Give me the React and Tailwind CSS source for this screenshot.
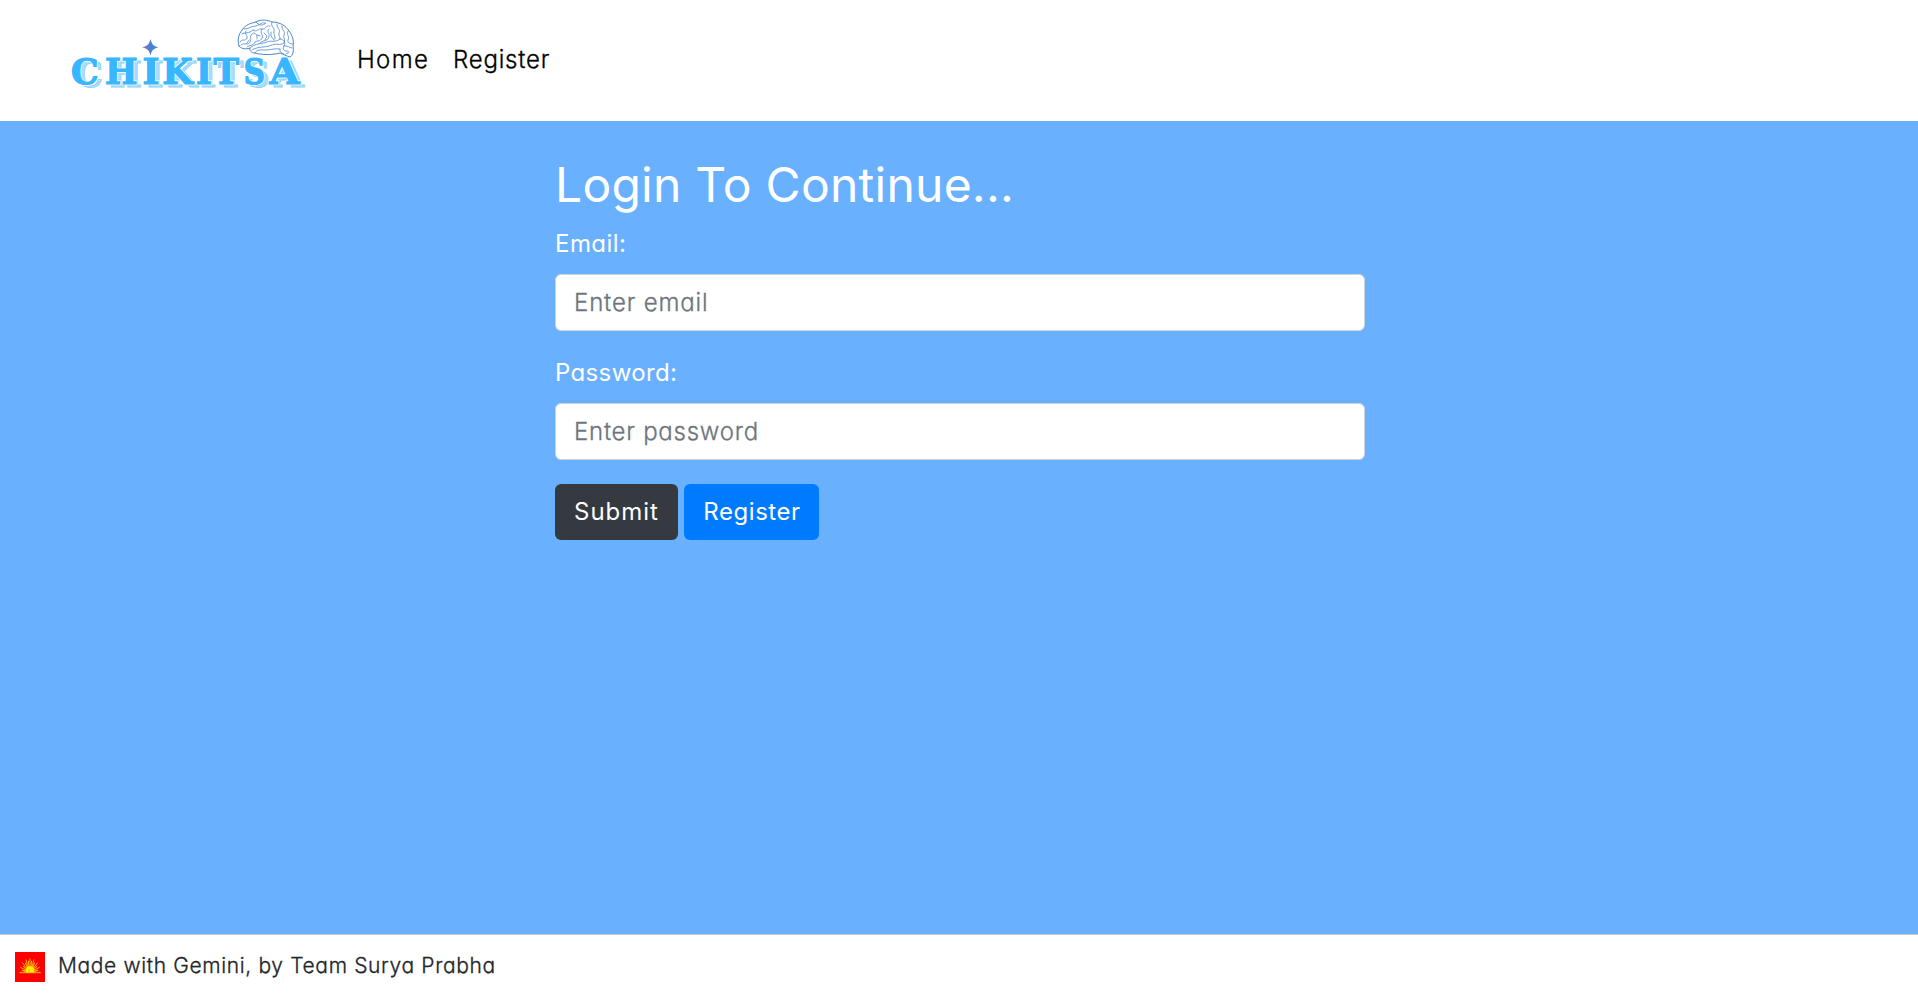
const LETTERS = [
  ['C', 71, 27.5],
  ['H', 105, 32.5],
  ['I', 142.5, 17],
  ['K', 162.3, 30.5],
  ['I', 196, 16],
  ['T', 213.5, 25.5],
  ['S', 243.5, 21.5],
  ['A', 269.5, 30],
];

function Logo() {
  return (
    <svg className="block h-[100px] w-[250px]" viewBox="60 10 250 100" role="img" aria-label="Chikitsa">
      <defs>
        <g id="word" fontFamily="'DejaVu Serif', serif" fontWeight="700" fontSize="36">
          {LETTERS.map(([c, x, w], i) => (
            <text key={i} x={x} y="83.6" textLength={w} lengthAdjust="spacingAndGlyphs">
              {c}
            </text>
          ))}
        </g>
        <pattern id="hatch" width="2" height="2" patternUnits="userSpaceOnUse">
          <rect width="2" height="2" fill="#d6efff" />
          <rect width="1" height="1" fill="#6cc6fb" />
          <rect x="1" y="1" width="1" height="1" fill="#8ed3fc" />
        </pattern>
        <linearGradient id="spark" x1="0" x2="1">
          <stop offset="0" stopColor="#9a70b8" />
          <stop offset="0.5" stopColor="#4a7fd0" />
          <stop offset="1" stopColor="#3e8fe0" />
        </linearGradient>
      </defs>
      <g fill="none" stroke="#3577c4" strokeWidth="0.7" strokeLinecap="round" strokeLinejoin="round">
        <path strokeWidth="0.9" d="M239 46C237 39 239 34 242 30C245 25 251 23 256 22C261 19 268 20 272 22C280 22 286 26 289 31C293 36 294 42 293 46C294 50 293 56 290 57C286 56 283 54 280 53C273 55 261 55 255 53C251 53 249 50 250 48C245 50 240 48 239 46Z" />
        <path d="M240 42C242 38 246 42 247 38C248 35 244 34 246 31M242 34C245 32 249 34 253 30M244 29C249 29 251 26 256 26C260 25 261 22 265 23" />
        <path d="M241 45C245 42 248 46 250 42C252 38 249 37 252 34C255 31 258 36 257 39M247 47C250 45 253 46 255 42C258 40 260 42 262 38C264 35 259 33 262 29" />
        <path d="M253 30C257 33 258 28 262 29C266 30 265 25 270 26M256 22C259 26 263 26 266 23M260 43C265 39 267 42 269 37C270 33 266 32 269 29" />
        <path d="M250 48C255 43 262 44 267 42C272 40 275 43 280 39M252 50C258 46 265 48 272 45C277 43 280 46 284 43M255 53C257 49 261 50 266 50C271 50 275 48 280 49" />
        <path d="M272 22C270 27 275 27 274 31C273 35 276 36 275 39M277 24C276 28 281 29 279 33C278 36 281 37 280 39M282 26C281 30 286 31 284 35C283 38 286 40 284 43" />
        <path d="M288 31C286 35 290 36 288 40C287 43 291 44 293 44M280 39C284 39 286 43 284 46C282 49 284 52 288 51M284 46C288 45 289 48 292 48M280 49C279 51 281 53 284 54M286 54L289 52" />
        <path d="M264 33L267 36L265 40M271 32L271 36L274 40M249 40L247 43M257 35L260 36" />
      </g>
      <use href="#word" fill="url(#hatch)" stroke="#8fd2fb" strokeWidth="0.8" transform="translate(4.6 3.2)" />
      <use href="#word" fill="#fff" stroke="#fff" strokeWidth="2.6" />
      <use href="#word" fill="#38b6ff" stroke="#38b6ff" strokeWidth="1.2" />
      <path fill="url(#spark)" d="M150.5 39C151.7 44.3 153.2 46 158.5 47.3C153.2 48.8 151.7 50.4 150.5 55.5C149.2 50.4 147.7 48.8 142 47.3C147.7 46 149.2 44.3 150.5 39Z" />
    </svg>
  );
}

const RAYS = Array.from({ length: 17 }, (_, i) => {
  const a = Math.PI * (i / 16);
  const r = i % 2 ? 8.5 : 10.5;
  return `M${15 - 5 * Math.cos(a)} ${20 - 5 * Math.sin(a)}L${15 - r * Math.cos(a)} ${20.5 - (r + 3.5) * Math.sin(a)}`;
}).join('');

function Sun() {
  return (
    <svg className="block size-[30px]" viewBox="0 0 30 30" aria-hidden="true">
      <rect width="30" height="30" fill="#f00" />
      <path d={RAYS} stroke="#ffb400" strokeWidth="1" />
      <path d="M9 21A6 6.5 0 0 1 21 21Z" fill="#ff9d00" />
      <path d="M11 21V18A4 4 0 0 1 19 18V21Z" fill="#ffee00" />
      <path d="M14 21V17" stroke="#ff9d00" strokeWidth="0.8" />
      <path d="M5 21H26" stroke="#ff8a00" strokeWidth="0.6" />
    </svg>
  );
}

const INPUT =
  'block h-[57px] w-full rounded-[6px] border border-[#ced4da] bg-white px-[18px] text-[24px] font-light text-[#495057] outline-none [-webkit-text-stroke:0.3px] placeholder:text-[#6c757d] placeholder:opacity-100';

export default function App() {
  return (
    <div className="flex h-[996px] flex-col overflow-hidden bg-white text-[24px] leading-[36px] [font-family:Inter,sans-serif] [font-feature-settings:'cv11']">
      <nav className="flex h-[121px] shrink-0 items-start pt-[10px] pl-[60px] font-light text-black [-webkit-text-stroke:0.3px]">
        <div className="[-webkit-text-stroke:0]">
          <Logo />
        </div>
        <div className="flex pt-[32px] pl-[47px]">
          <a href="#" className="w-[96px] tracking-[1.35px]">Home</a>
          <a href="#" className="tracking-[0.8px]">Register</a>
        </div>
      </nav>
      <main className="flex-1 bg-[#69b0ff] pl-[555px] text-white">
        <form className="w-[810px] pt-[35px]" onSubmit={(e) => e.preventDefault()}>
          <h1 className="mb-3 text-[48px] leading-[58px] tracking-[0.25px]">Login To Continue...</h1>
          <label className="mb-3 block tracking-[0.45px]" htmlFor="email">Email:</label>
          <input id="email" type="email" placeholder="Enter email" className={`${INPUT} tracking-[0.85px]`} />
          <label className="mt-6 mb-3 block tracking-[0.35px]" htmlFor="password">Password:</label>
          <input id="password" type="password" placeholder="Enter password" className={`${INPUT} tracking-[0.75px]`} />
          <div className="mt-6 flex gap-[6px]">
            <button type="submit" className="h-14 w-[123px] rounded-[6px] bg-[#343a40] tracking-[1px]">Submit</button>
            <button type="button" className="h-14 w-[135px] rounded-[6px] bg-[#007bff] pl-[1px] tracking-[0.55px]">Register</button>
          </div>
        </form>
      </main>
      <footer className="flex h-[62px] shrink-0 items-start border-t border-[#c8c8cc] pt-[17px] pl-[15px] text-[#212529]">
        <Sun />
        <span className="-mt-[4px] ml-[13px] text-[21px] font-light tracking-[0.64px] [-webkit-text-stroke:0.3px]">Made with Gemini, by Team Surya Prabha</span>
      </footer>
    </div>
  );
}
